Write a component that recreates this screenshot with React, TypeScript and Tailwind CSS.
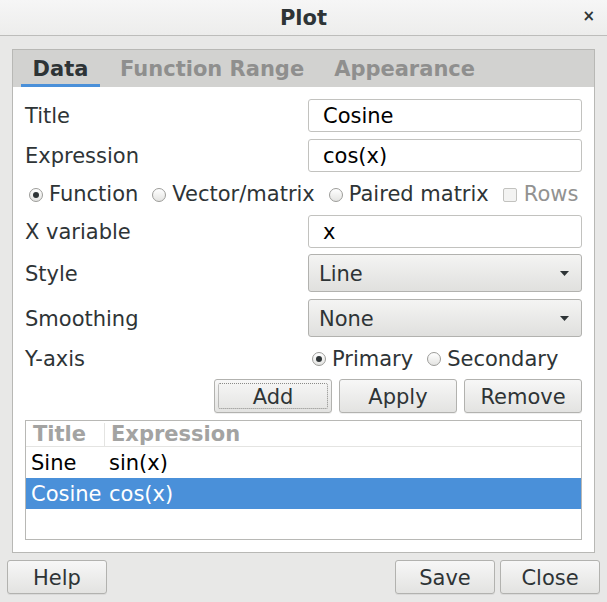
import React from 'react';

const font = { fontFamily: '"DejaVu Sans", Verdana, sans-serif' };

const Radio = ({ checked }: { checked?: boolean }) => (
  <span className="inline-flex h-[14px] w-[14px] shrink-0 items-center justify-center rounded-full border border-[#9c9c99] bg-gradient-to-b from-[#ffffff] to-[#e4e4e2]">
    {checked && <span className="h-[6px] w-[6px] rounded-full bg-[#2e3436]" />}
  </span>
);

const Btn = ({ label, w, focus }: { label: string; w: string; focus?: boolean }) => (
  <button
    className={`${w} relative flex h-[34px] items-center justify-center rounded-[3px] border border-[#b2b2af] bg-gradient-to-b from-[#f7f7f7] to-[#e3e3e1] pt-[2px] text-[#2e3436] shadow-[0_1px_0_rgba(0,0,0,0.06)]`}
  >
    {focus && <span className="absolute inset-[3px] rounded-[2px] border border-dotted border-[#8a8a88]" />}
    <span className="relative">{label}</span>
  </button>
);

const Input = ({ value, h }: { value: string; h: string }) => (
  <div className={`flex ${h} w-[274px] items-center rounded-[3px] border border-[#c2c2bf] bg-white pl-[14px] pt-[2px] text-black`}>
    {value}
  </div>
);

const Combo = ({ value }: { value: string }) => (
  <div className="flex h-[38px] w-[274px] items-center justify-between rounded-[3px] border border-[#b2b2af] bg-gradient-to-b from-[#f4f4f3] to-[#e0e0de] pl-[10px] pr-[12px] text-[#2e3436]">
    <span className="pt-[2px]">{value}</span>
    <svg width="9" height="5" viewBox="0 0 9 5">
      <path d="M0 0 L9 0 L4.5 5 Z" fill="#2e3436" />
    </svg>
  </div>
);

const App: React.FC = () => {
  return (
    <div className="flex h-[602px] w-[607px] flex-col overflow-hidden bg-[#e8e8e7] text-[21px] leading-none text-[#2e3436]" style={font}>
      {/* title bar */}
      <div className="relative flex h-[36px] shrink-0 items-center justify-center border-b border-[#bdbdbb] bg-gradient-to-b from-[#f6f6f6] to-[#ededec] pt-[2px]">
        <span className="font-bold text-[#2e3436]">Plot</span>
        <span className="absolute right-[12px] top-[9px] text-[15px] font-bold">×</span>
      </div>

      {/* notebook */}
      <div className="ml-[12px] mt-[13px] flex h-[504px] w-[583px] flex-col border border-[#b8b8b5] bg-white">
        <div className="flex h-[37px] shrink-0 items-end bg-[#d2d2d0] pl-[8px]">
          <div className="flex h-[37px] w-[79px] flex-col items-center justify-center border-b-[3px] border-[#4a90d9] pt-[4px] font-bold text-[#2e3436]">
            Data
          </div>
          <div className="flex h-[37px] items-center pl-[20px] pt-[2px] font-bold text-[#8f8f8e]">Function Range</div>
          <div className="flex h-[37px] items-center pl-[30px] pt-[2px] font-bold text-[#8f8f8e]">Appearance</div>
        </div>

        <div className="flex flex-col pl-[12px] pr-[12px] pt-[12px]">
          <div className="flex h-[33px] items-center justify-between">
            <span className="pt-[2px]">Title</span>
            <Input value="Cosine" h="h-[33px]" />
          </div>
          <div className="mt-[7px] flex h-[33px] items-center justify-between">
            <span className="pt-[2px]">Expression</span>
            <Input value="cos(x)" h="h-[33px]" />
          </div>
          <div className="flex h-[43px] items-center pt-[2px]">
            <span className="ml-[4px] flex items-center gap-[6px]">
              <Radio checked />
              Function
            </span>
            <span className="ml-[14px] flex items-center gap-[6px]">
              <Radio />
              Vector/matrix
            </span>
            <span className="ml-[14px] flex items-center gap-[6px]">
              <Radio />
              Paired matrix
            </span>
            <span className="ml-[14px] flex items-center gap-[7px] text-[#929291]">
              <span className="h-[14px] w-[14px] rounded-[2px] border border-[#c2c2bf] bg-[#f3f3f2]" />
              Rows
            </span>
          </div>
          <div className="flex h-[33px] items-center justify-between">
            <span className="pt-[2px]">X variable</span>
            <Input value="x" h="h-[33px]" />
          </div>
          <div className="mt-[6px] flex h-[38px] items-center justify-between">
            <span className="pt-[2px]">Style</span>
            <Combo value="Line" />
          </div>
          <div className="mt-[7px] flex h-[38px] items-center justify-between">
            <span className="pt-[2px]">Smoothing</span>
            <Combo value="None" />
          </div>
          <div className="flex h-[42px] items-center justify-between pt-[2px]">
            <span>Y-axis</span>
            <div className="flex w-[274px] items-center">
              <span className="ml-[4px] flex items-center gap-[6px]">
                <Radio checked />
                Primary
              </span>
              <span className="ml-[14px] flex items-center gap-[6px]">
                <Radio />
                Secondary
              </span>
            </div>
          </div>
          <div className="flex justify-end gap-[7px]">
            <Btn label="Add" w="w-[118px]" focus />
            <Btn label="Apply" w="w-[118px]" />
            <Btn label="Remove" w="w-[118px]" />
          </div>

          {/* list */}
          <div className="mt-[7px] flex h-[120px] flex-col border border-[#b8b8b5] bg-white">
            <div className="flex h-[26px] shrink-0 items-center border-b border-[#e4e4e2] pt-[2px] font-bold text-[#a3a3a2]">
              <span className="flex h-full w-[79px] items-center border-r border-[#e4e4e2] pl-[7px]">Title</span>
              <span className="pl-[6px]">Expression</span>
            </div>
            <div className="flex h-[31px] items-center pt-[2px] text-black">
              <span className="w-[83px] pl-[5px]">Sine</span>
              <span>sin(x)</span>
            </div>
            <div className="flex h-[31px] items-center bg-[#4a90d9] pt-[2px] text-white">
              <span className="w-[83px] pl-[5px]">Cosine</span>
              <span>cos(x)</span>
            </div>
          </div>
        </div>
      </div>

      {/* footer */}
      <div className="mt-[7px] flex items-center px-[7px]">
        <Btn label="Help" w="w-[100px]" />
        <div className="ml-auto flex gap-[5px]">
          <Btn label="Save" w="w-[100px]" />
          <Btn label="Close" w="w-[100px]" />
        </div>
      </div>
    </div>
  );
};

export default App;
